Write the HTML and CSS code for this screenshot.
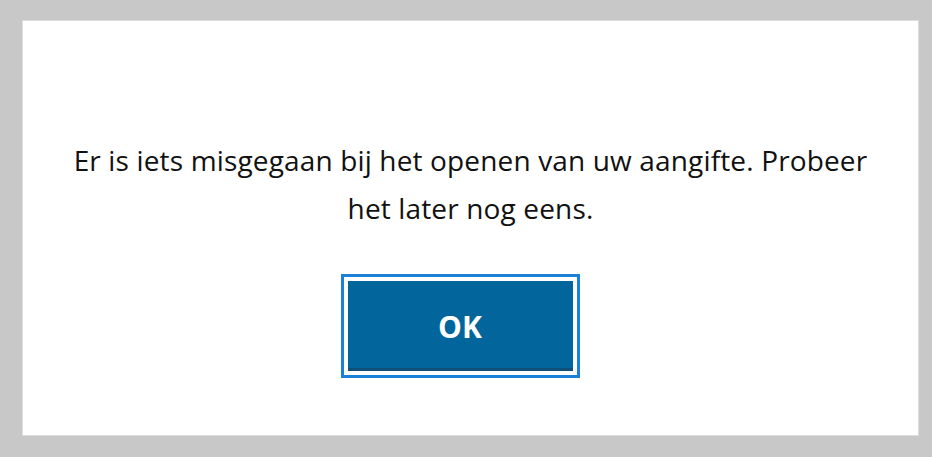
FILE: index.html
```html
<!DOCTYPE html>
<html lang="nl">
<head>
<meta charset="utf-8">
<title>Fout</title>
<link rel="stylesheet" href="styles.css">
</head>
<body>
<div class="dialog">
  <p class="message">Er is iets misgegaan bij het openen van uw aangifte. Probeer<br>het later nog eens.</p>
  <button class="ok-button" type="button">OK</button>
</div>
</body>
</html>
```
FILE: styles.css
```css
html, body {
  margin: 0;
  padding: 0;
}
body {
  background: #c8c8c8;
  width: 932px;
  height: 457px;
  padding: 20px 0 0 22px;
  box-sizing: border-box;
  font-family: "Open Sans", "Liberation Sans", sans-serif;
}
.dialog {
  width: 897px;
  height: 416px;
  box-sizing: border-box;
  background: #ffffff;
  border: 1px solid #dedede;
  display: flex;
  flex-direction: column;
  align-items: center;
  padding-top: 115px;
}
.message {
  margin: 0;
  font-size: 28px;
  line-height: 48px;
  color: #111111;
  text-align: center;
  letter-spacing: 0.15px;
}
.ok-button {
  margin-top: 49px;
  margin-left: -21px;
  width: 225px;
  height: 90px;
  border: none;
  background: #02669c;
  box-shadow: inset 0 -3px 0 #0f4f78;
  outline: 3px solid #1b80d8;
  outline-offset: 4px;
  color: #ffffff;
  font-family: "Open Sans", "Liberation Sans", sans-serif;
  font-weight: 700;
  font-size: 30px;
  cursor: pointer;
}
```
